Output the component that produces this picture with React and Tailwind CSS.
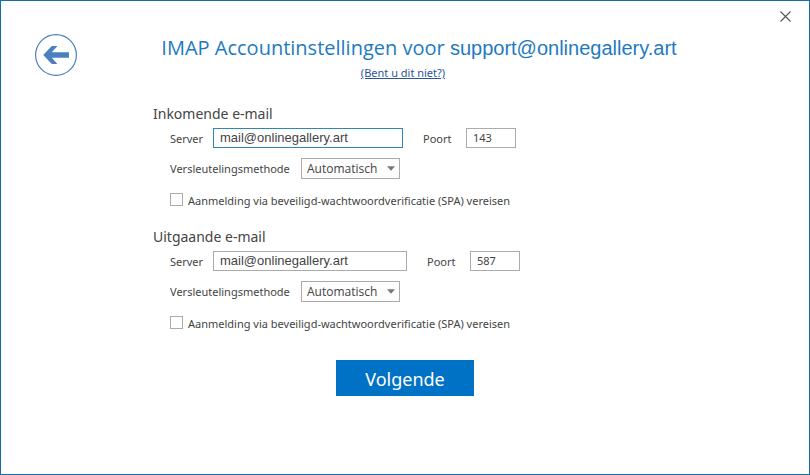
import { useState } from 'react';

const MailSection = ({ id, title, settings, setSettings, active }) => {

    const handleChange = (e) => {
        const { name, type, value, checked } = e.target;
        setSettings(prev => ({
            ...prev,
            [name]: type === 'checkbox' ? checked : value,
        }));
    };

    return (
        <section className="pb-4">
            <h2 className="text-[14px] leading-5">{title}</h2>

            <div className="pl-[17px] pt-1 flex items-center">
                <label htmlFor={`${id}-server`} className="w-[43px] pt-0.5">Server</label>
                <input
                    id={`${id}-server`}
                    type="text"
                    name="server"
                    value={settings.server}
                    onChange={handleChange}
                    className={`h-5 border px-1.5 pb-0.5 font-['Liberation_Sans',Arial,sans-serif] text-[13px] outline-none ${active ? 'w-[190px] border-[#2e86bd]' : 'w-[194px] border-[#ababab]'}`}
                />
                <label htmlFor={`${id}-port`} className="ml-5 w-[43px] pt-0.5">Poort</label>
                <input
                    id={`${id}-port`}
                    type="text"
                    name="port"
                    value={settings.port}
                    onChange={handleChange}
                    className="h-5 w-[50px] border border-[#ababab] px-1.5 pb-0.5 text-[11px] outline-none"
                />
            </div>

            <div className="pl-[17px] pt-[10px] flex items-center">
                <label htmlFor={`${id}-encryption`} className="w-[131px]">Versleutelingsmethode</label>
                <div className="relative">
                    <select
                        id={`${id}-encryption`}
                        name="encryption"
                        value={settings.encryption}
                        onChange={handleChange}
                        className="block h-[21px] w-[99px] appearance-none border border-[#ababab] bg-[#fdfdfd] pl-[5px] font-['Open_Sans','Noto_Sans',sans-serif] text-[12px] outline-none"
                    >
                        <option>Automatisch</option>
                        <option>Geen</option>
                        <option>SSL/TLS</option>
                        <option>STARTTLS</option>
                    </select>
                    <svg className="pointer-events-none absolute right-[5px] top-2" width="8" height="5" viewBox="0 0 8 5">
                        <path d="M0 0.3h8L4 4.7z" fill="#777777" />
                    </svg>
                </div>
            </div>

            <div className="pl-[17px] pt-3 flex items-center">
                <input
                    id={`${id}-spa`}
                    type="checkbox"
                    name="spa"
                    checked={settings.spa}
                    onChange={handleChange}
                    className="mb-1 size-[13px] appearance-none border border-[#ababab] bg-white checked:bg-[#0072c6]"
                />
                <label htmlFor={`${id}-spa`} className="pl-[5px] leading-5">
                    Aanmelding via beveiligd-wachtwoordverificatie (SPA) vereisen
                </label>
            </div>
        </section>
    );
}

const App = () => {

    const [incoming, setIncoming] = useState({
        server: 'mail@onlinegallery.art',
        port: '143',
        encryption: 'Automatisch',
        spa: false,
    });
    const [outgoing, setOutgoing] = useState({
        server: 'mail@onlinegallery.art',
        port: '587',
        encryption: 'Automatisch',
        spa: false,
    });

    return (
        <div className="min-h-screen border border-[#156ea8] bg-white font-['Noto_Sans','Open_Sans',sans-serif] text-[11px] leading-4 text-[#444444]">
            <div className="flex justify-end pr-[18px] pt-[10px]">
                <button type="button" aria-label="Sluiten">
                    <svg width="11" height="11" viewBox="0 0 11 11" fill="none" stroke="#555555" strokeWidth="1.1">
                        <path d="M0.5 0.5l10 10M10.5 0.5l-10 10" />
                    </svg>
                </button>
            </div>

            <header className="flex items-start px-[34px] pt-3">
                <button type="button" aria-label="Terug">
                    <svg width="42" height="42" viewBox="0 0 42 42">
                        <circle cx="21" cy="21" r="20.4" fill="none" stroke="#4a7fb8" strokeWidth="1.2" />
                        <path d="M8.2 21l8.6-9h5.6l-5.6 6.2H34v5.6H16.8l5.6 6.2h-5.6z" fill="#4a80bd" />
                    </svg>
                </button>
                <div className="flex-1 pr-[46px] text-center">
                    <h1 className="pl-8 pb-[3px] font-['Open_Sans','Noto_Sans',sans-serif] text-xl leading-7 text-[#1e7ac0]">
                        IMAP Accountinstellingen voor <span className="font-['Liberation_Sans',Arial,sans-serif]">support@onlinegallery.art</span>
                    </h1>
                    <a href="#" className="text-[#2b579a] underline">(Bent u dit niet?)</a>
                </div>
            </header>

            <form className="pt-[23px]" onSubmit={(e) => e.preventDefault()}>
                <div className="mx-auto w-[504px]">
                    <MailSection id="incoming" title="Inkomende e-mail" settings={incoming} setSettings={setIncoming} active />
                    <MailSection id="outgoing" title="Uitgaande e-mail" settings={outgoing} setSettings={setOutgoing} />
                </div>
                <div className="flex justify-center pt-[10px]">
                    <button type="submit" className="h-9 w-[138px] bg-[#0072c6] pt-0.5 text-lg text-white">Volgende</button>
                </div>
            </form>
        </div>
    );
}

export default App;
